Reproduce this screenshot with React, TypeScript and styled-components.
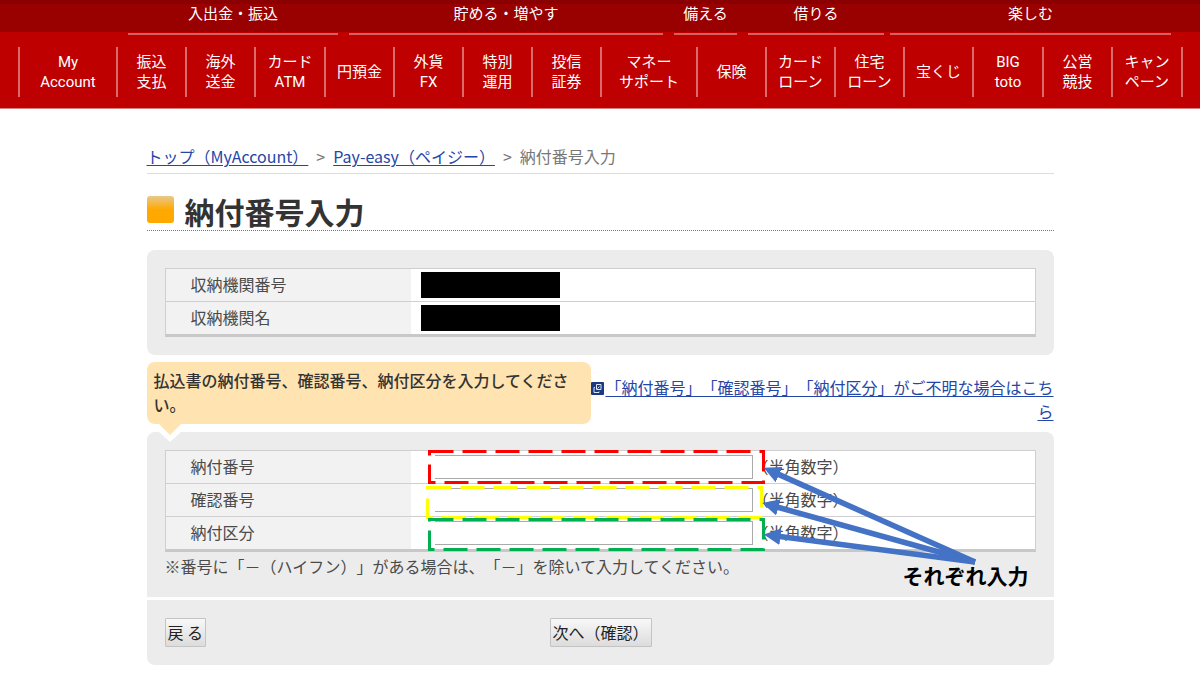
import React from "react";
import styled, { createGlobalStyle } from "styled-components";

const GlobalStyle = createGlobalStyle`
  *, *::before, *::after { box-sizing: border-box; }
  body {
    margin: 0;
    background: #fff;
    color: #4a4a4a;
    font: 16px/24px "Noto Sans CJK JP", sans-serif;
    text-spacing-trim: space-all;
    overflow-x: hidden;
  }
`;

const CategoryBar = styled.ul`
  display: grid;
  grid-template-columns: 210fr 314fr 63fr 136fr 276fr;
  gap: 11px;
  height: 36px;
  margin: 0;
  padding: 0 29px 0 128px;
  list-style: none;
  background: linear-gradient(#8a0000 0 4px, #990000 4px 32px, #be0000 32px);
`;

const Category = styled.li`
  height: 35px;
  border-bottom: 2px solid #d46060;
  color: #fff;
  font-size: 15px;
  line-height: 26px;
  text-align: center;
  white-space: nowrap;
  &:last-child { margin-left: -5px; }
`;

const ServiceNav = styled.nav`
  display: flex;
  height: 73px;
  padding: 11px 17px 11px 18px;
  background: #be0000;
  border-bottom: 1px solid #d98080;
`;

const Service = styled.a<{ $grow: number }>`
  flex: ${(p) => p.$grow} 1 0;
  display: flex;
  align-items: center;
  justify-content: center;
  border-right: 2px solid #d96b6b;
  color: #fff;
  font: 15px/20px Roboto, "Noto Sans CJK JP", sans-serif;
  text-align: center;
  text-decoration: none;
  white-space: pre;
  &:first-child { border-left: 2px solid #d96b6b; }
`;

const Page = styled.main`
  max-width: 907px;
  margin: 0 auto;
  padding-top: 35px;
`;

const Link = styled.a`
  color: #2446a8;
  text-decoration: underline;
  text-underline-offset: 2px;
`;

const Crumbs = styled.nav`
  display: flex;
  gap: 8px;
  height: 30px;
  border-bottom: 1px solid #ddd;
  color: #777;
  white-space: nowrap;
`;

const Heading = styled.h1`
  display: flex;
  gap: 11px;
  height: 57px;
  margin: 0 0 19px;
  padding-top: 22px;
  border-bottom: 1px dotted #777;
  color: #333;
  font-size: 30px;
  font-weight: 700;
  line-height: 30px;
  &::before {
    content: "";
    width: 27px;
    height: 27px;
    border-radius: 3px;
    background: linear-gradient(#e8c98c, #ffa800 50%);
  }
`;

const Panel = styled.section<{ $shape: string }>`
  position: relative;
  padding: 18px;
  border-radius: ${(p) => p.$shape};
  background: #ececec;
`;

const DataTable = styled.table`
  width: 100%;
  border: 1px solid #cfcfcf;
  border-bottom: 3px solid #c8c8c8;
  border-spacing: 0;
  background: #fff;
  th, td {
    box-sizing: content-box;
    height: 32px;
  }
  td { padding: 0 0 0 10px; }
  tr + tr > * { border-top: 1px solid #cfcfcf; }
`;

const RowHead = styled.th`
  && { height: 30px; }
  width: 220px;
  padding: 0 0 2px 25px;
  background: #f2f2f2;
  font-weight: 400;
  line-height: 22px;
  text-align: left;
`;

const Redacted = styled.div`
  width: 139px;
  height: 26px;
  background: #000;
`;

const Guide = styled.div`
  display: flex;
  align-items: flex-start;
  margin: 7px 0 8px;
`;

const Bubble = styled.p`
  position: relative;
  flex: 0 0 49%;
  margin: 0;
  padding: 6px 7px 8px;
  border-radius: 8px;
  background: #ffe3b0;
  color: #333;
  font-weight: 500;
`;

const Pointer = styled.svg`
  position: absolute;
  z-index: 1;
  left: 8px;
  top: 100%;
`;

const Help = styled.p`
  flex: 1 1 0;
  margin: 13px 0 0;
  text-align: right;
  word-break: break-all;
  svg {
    margin-right: 1px;
    vertical-align: -1px;
  }
`;

const Field = styled.div`
  display: flex;
  align-items: center;
  padding-left: 14px;
`;

const NumberInput = styled.input`
  width: 318px;
  height: 24px;
  border: 1px solid #aaa;
  border-left: 0;
  background: #fff;
  font: inherit;
`;

const Unit = styled.span`
  padding-bottom: 2px;
  line-height: 22px;
`;

const Note = styled.p`
  margin: 2px 0 1px;
`;

const Actions = styled(Panel)`
  display: grid;
  grid-template-columns: 385px 1fr;
  justify-items: start;
  margin-top: 3px;
`;

const Button = styled.button`
  height: 29px;
  padding: 0 2px 2px;
  border: 1px solid #c4c4c4;
  border-radius: 1px;
  background: linear-gradient(#f8f8f8, #dcdcdc);
  color: #222;
  font: inherit;
  white-space: pre;
`;

const Markup = styled.svg`
  position: absolute;
  inset: 0;
  width: 100%;
  height: 100%;
  pointer-events: none;
`;

const Callout = styled.strong`
  position: absolute;
  left: 756px;
  top: 131px;
  color: #000;
  font-size: 21px;
  font-weight: 700;
  white-space: nowrap;
`;

const categories = ["入出金・振込", "貯める・増やす", "備える", "借りる", "楽しむ"];

const services: [string, number][] = [
  ["My\nAccount", 96],
  ["振込\n支払", 67],
  ["海外\n送金", 67],
  ["カード\nATM", 68],
  ["円預金", 67],
  ["外貨\nFX", 67],
  ["特別\n運用", 67],
  ["投信\n証券", 67],
  ["マネー\nサポート", 94],
  ["保険", 67],
  ["カード\nローン", 67],
  ["住宅\nローン", 67],
  ["宝くじ", 67],
  ["BIG\ntoto", 68],
  ["公営\n競技", 67],
  ["キャン\nペーン", 68],
];

const fields = ["納付番号", "確認番号", "納付区分"];

const frames = [
  { color: "#ff0000", x: 282.5, y: 19.5, height: 31 },
  { color: "#ffff00", x: 280.5, y: 55.5, height: 30 },
  { color: "#00b050", x: 282.5, y: 87.5, height: 30 },
];

// Shaft ends; the arrow head continues from each of them.
const arrows = ["631.6 42.4", "630.9 75.3", "632.9 104.5"];

export default function App() {
  return (
    <>
      <GlobalStyle />
      <header>
        <CategoryBar>
          {categories.map((c) => (
            <Category key={c}>{c}</Category>
          ))}
        </CategoryBar>
        <ServiceNav>
          {services.map(([label, grow]) => (
            <Service key={label} href="#" $grow={grow}>
              {label}
            </Service>
          ))}
        </ServiceNav>
      </header>
      <Page>
        <Crumbs>
          <Link href="#">トップ（MyAccount）</Link>
          <span>&gt;</span>
          <Link href="#">Pay-easy（ペイジー）</Link>
          <span>&gt;</span>
          <span>納付番号入力</span>
        </Crumbs>
        <Heading>納付番号入力</Heading>
        <Panel $shape="8px">
          <DataTable>
            <tbody>
              <tr>
                <RowHead scope="row">収納機関番号</RowHead>
                <td><Redacted /></td>
              </tr>
              <tr>
                <RowHead scope="row">収納機関名</RowHead>
                <td><Redacted /></td>
              </tr>
            </tbody>
          </DataTable>
        </Panel>
        <Guide>
          <Bubble>
            払込書の納付番号、確認番号、納付区分を入力してください。
            <Pointer width="30" height="18" aria-hidden="true">
              <path d="M3 7H27L15 18Z" fill="#fff" />
              <path d="M4 0H26L15 11Z" fill="#ffe3b0" />
            </Pointer>
          </Bubble>
          <Help>
            <svg width="13" height="13" viewBox="0 0 13 13" aria-hidden="true">
              <rect width="13" height="13" rx="1" fill="#1c3a80" />
              <path
                d="M5.5 2.5h4.5v5h-4.5zM8 9.5v1h-5v-5h1M6.5 6.5l2-2"
                fill="none"
                stroke="#dfe6f5"
              />
            </svg>
            <Link href="#">「納付番号」「確認番号」「納付区分」がご不明な場合はこちら</Link>
          </Help>
        </Guide>
        <Panel $shape="8px 8px 0 0">
          <DataTable>
            <tbody>
              {fields.map((f, i) => (
                <tr key={f}>
                  <RowHead scope="row">
                    <label htmlFor={`field-${i}`}>{f}</label>
                  </RowHead>
                  <td>
                    <Field>
                      <NumberInput id={`field-${i}`} inputMode="numeric" />
                      <Unit>（半角数字）</Unit>
                    </Field>
                  </td>
                </tr>
              ))}
            </tbody>
          </DataTable>
          <Note>※番号に「－（ハイフン）」がある場合は、「－」を除いて入力してください。</Note>
          <Markup fill="none" aria-hidden="true">
            <marker
              id="head"
              viewBox="0 0 3 3"
              markerWidth="3"
              markerHeight="3"
              refX="0.1"
              refY="1.5"
              orient="auto"
            >
              <path d="M0 0L3 1.5L0 3Z" fill="#4472c4" />
            </marker>
            {frames.map((f) => (
              <rect
                key={f.color}
                x={f.x}
                y={f.y}
                width="334"
                height={f.height}
                stroke={f.color}
                strokeWidth="3"
                strokeDasharray="24 9"
              />
            ))}
            {arrows.map((end) => (
              <path
                key={end}
                d={`M828 130L${end}`}
                stroke="#4472c4"
                strokeWidth="5.6"
                markerEnd="url(#head)"
              />
            ))}
          </Markup>
          <Callout>それぞれ入力</Callout>
        </Panel>
        <Actions $shape="0 0 8px 8px">
          <Button type="button">戻 る</Button>
          <Button type="submit">次へ（確認）</Button>
        </Actions>
      </Page>
    </>
  );
}
